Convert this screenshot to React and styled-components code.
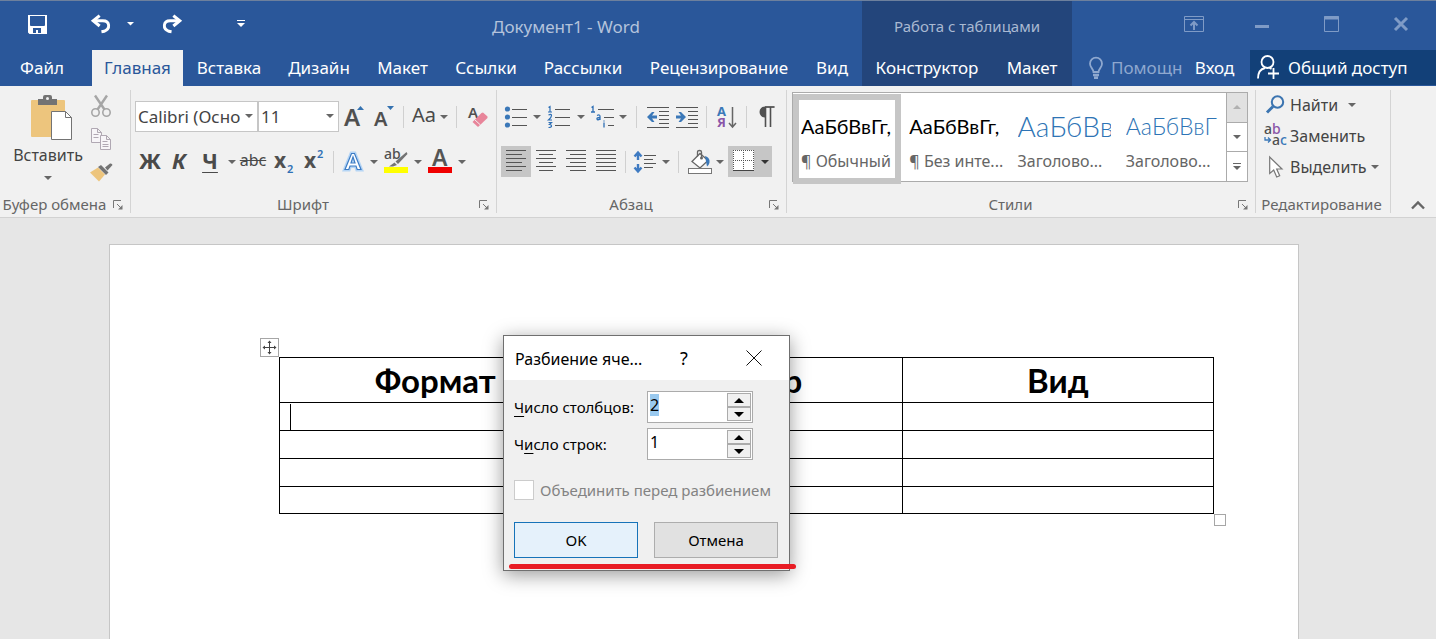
import React, { useEffect, useRef } from "react";
import styled, { createGlobalStyle, css } from "styled-components";

const UI = '"Noto Sans", "Open Sans", sans-serif';
const DOC = 'Lato, "Open Sans", sans-serif';

const Global = createGlobalStyle`
  *, *::before, *::after { box-sizing: border-box; }
  body { margin: 0; font-family: ${UI}; background: #e6e6e6; color: #444; }
  button, input, select { font: inherit; color: inherit; border: 0; padding: 0; margin: 0; background: none; border-radius: 0; }
  svg { display: block; flex: none; overflow: visible; }
`;

const Window = styled.div`
  min-height: 100vh;
  display: flex;
  flex-direction: column;
  overflow: hidden;
`;

/* ---------- header ---------- */
const Header = styled.header`
  display: flex;
  background: #2a579a;
  border-top: 1px solid #6d809d;
  color: #fff;
  font-size: 17px;
`;
const HeadPart = styled.div`
  display: flex;
  flex-direction: column;
  flex: ${(p) => (p.$grow ? "1 1 0" : "none")};
  background: ${(p) => (p.$dark ? "#23457b" : "transparent")};
`;
const TitleRow = styled.div`
  height: 49px;
  display: flex;
  align-items: flex-start;
  justify-content: ${(p) => p.$justify || "flex-start"};
  padding-right: ${(p) => p.$right || 0}px;
`;
const TabRow = styled.nav`
  height: 36px;
  display: flex;
  align-items: stretch;
`;
const QuickButton = styled.button`
  width: ${(p) => p.$w}px;
  height: 46px;
  display: flex;
  align-items: center;
  justify-content: center;
`;
const DocTitle = styled.div`
  flex: 1;
  padding-left: 220px;
  line-height: 51px;
  color: #b4c3dc;
  white-space: nowrap;
`;
const ContextTitle = styled.div`
  font-size: 15px;
  line-height: 51px;
  color: #a9b9d2;
`;
const Tab = styled.button`
  width: ${(p) => p.$w}px;
  margin-right: ${(p) => p.$after || 0}px;
  padding-bottom: 2px;
  white-space: nowrap;
  text-align: center;
  ${(p) => p.$active && css`background: #f1f1f1; color: #2a579a;`}
`;
const TellMe = styled.label`
  display: flex;
  align-items: center;
  gap: 8px;
  padding-left: 17px;
  color: #8fa8cf;
`;
const TellMeInput = styled.input`
  width: 75px;
  padding-bottom: 2px;
  &::placeholder { color: #8fa8cf; opacity: 1; }
`;
const Share = styled.button`
  flex: 1;
  display: flex;
  align-items: center;
  gap: 8px;
  padding: 0 0 1px 7px;
  margin: 0 0 1px 7px;
  background: #124078;
  white-space: nowrap;
`;
const WindowButton = styled(QuickButton)`
  width: 69px;
  color: #7f9bc6;
`;

/* ---------- ribbon ---------- */
const Ribbon = styled.section`
  display: flex;
  height: 132px;
  padding: 4px 0;
  background: #f1f1f1;
  border-bottom: 1px solid #d2d2d2;
`;
const Group = styled.div`
  flex: ${(p) => (p.$grow ? "1 1 0" : "none")};
  min-width: ${(p) => p.$w || 0}px;
  display: flex;
  flex-direction: column;
  border-right: 1px solid #d4d4d4;
`;
const GroupBody = styled.div`
  flex: 1;
  display: flex;
  flex-direction: ${(p) => (p.$row ? "row" : "column")};
  gap: ${(p) => p.$gap || 0}px;
  padding: ${(p) => p.$pad || "11px 0 0 4px"};
`;
const GroupFooter = styled.div`
  display: flex;
  align-items: center;
  height: 17px;
  padding-right: 3px;
  font-size: 15px;
  line-height: 17px;
  color: #666;
`;
const GroupLabel = styled.span`
  flex: 1;
  text-align: center;
  white-space: nowrap;
`;
const LaunchButton = styled.button`
  width: 18px;
  height: 16px;
  display: flex;
  align-items: center;
  justify-content: center;
`;
const ToolRow = styled.div`
  display: flex;
  align-items: center;
  height: 31px;
`;
const Tool = styled.button`
  width: ${(p) => p.$w || 30}px;
  height: 31px;
  display: flex;
  align-items: center;
  justify-content: center;
  gap: 4px;
  background: ${(p) => (p.$on ? "#c6c6c6" : "transparent")};
  margin-left: ${(p) => p.$space || 0}px;
`;
const Letter = styled.span`
  padding-bottom: 4px;
  font-size: ${(p) => p.$size || 22}px;
  line-height: 24px;
  font-weight: ${(p) => p.$weight || 700};
  font-style: ${(p) => (p.$italic ? "italic" : "normal")};
  text-decoration: ${(p) => p.$deco || "none"};
  text-decoration-thickness: 1px;
  text-underline-offset: 3px;
  color: #4a4a4a;
`;
const Sep = styled.i`
  width: 1px;
  height: 22px;
  margin: 0 ${(p) => p.$gap || 4}px;
  background: #d0d0d0;
`;
const Combo = styled.label`
  position: relative;
  width: ${(p) => p.$w}px;
  height: 31px;
  border: 1px solid #c6c6c6;
  background: #fff;
`;
const ComboSelect = styled.select`
  appearance: none;
  width: 100%;
  height: 29px;
  padding: 0 12px 0 2px;
  font-size: 17px;
`;
const ComboArrow = styled.span`
  position: absolute;
  right: 4px;
  top: 12px;
  pointer-events: none;
`;
const PasteButton = styled.button`
  width: 84px;
  padding-top: 5px;
  display: flex;
  flex-direction: column;
  align-items: center;
  font-size: 16px;
  line-height: 30px;
`;
const PasteCaret = styled.span`
  padding-top: 6px;
`;
const SmallTools = styled.div`
  display: flex;
  flex-direction: column;
  gap: 2px;
`;
const Gallery = styled.div`
  flex: 1;
  display: flex;
  height: 90px;
  border: 1px solid #ababab;
  background: #fff;
`;
const GalleryItems = styled.div`
  flex: 1;
  display: grid;
  grid-template-columns: repeat(4, 1fr);
  padding: 1px 0 2px;
`;
const StyleCard = styled.button`
  min-width: 0;
  border: 6px solid ${(p) => (p.$on ? "#c6c6c6" : "transparent")};
  padding: 8px 0 0 2px;
  text-align: left;
`;
const StylePreview = styled.span`
  display: block;
  width: 93px;
  overflow: hidden;
  white-space: nowrap;
  font-family: ${DOC};
  font-size: ${(p) => p.$size || 20}px;
  font-weight: ${(p) => (p.$light ? 300 : 400)};
  line-height: 36px;
  color: ${(p) => (p.$light ? "#2e74b5" : "#000")};
`;
const StyleName = styled.span`
  display: block;
  font-size: 16px;
  line-height: 34px;
  color: #666;
  white-space: nowrap;
`;
const GalleryScroll = styled.div`
  width: 21px;
  display: flex;
  flex-direction: column;
`;
const ScrollButton = styled.button`
  flex: 1;
  display: flex;
  align-items: center;
  justify-content: center;
  border-left: 1px solid #ababab;
  border-bottom: ${(p) => (p.$last ? 0 : 1)}px solid #ababab;
  background: ${(p) => (p.$off ? "#e1e1e1" : "#fff")};
`;
const EditButton = styled.button`
  display: flex;
  align-items: center;
  height: 31px;
  padding-bottom: 2px;
  font-size: 16px;
  white-space: nowrap;
`;
const EditIcon = styled.span`
  width: 26px;
  padding-left: ${(p) => p.$in || 0}px;
`;
const EditCaret = styled.span`
  padding-left: ${(p) => p.$gap}px;
`;
const Collapse = styled.button`
  flex: none;
  width: 45px;
  display: flex;
  align-items: flex-end;
  justify-content: center;
  padding: 0 0 3px 8px;
`;

/* ---------- document ---------- */
const Workspace = styled.main`
  position: relative;
  flex: 1;
  display: flex;
  padding: 26px 137px 0 109px;
`;
const Page = styled.article`
  flex: 1;
  background: #fff;
  border: 1px solid #c6c6c6;
  border-bottom: 0;
  padding: 112px 84px 0 169px;
`;
const TableBox = styled.div`
  position: relative;
`;
const DocTable = styled.table`
  width: 100%;
  table-layout: fixed;
  border-collapse: collapse;
  color: #000;
  font-family: ${DOC};
  th, td { border: 1px solid #000; padding: 0 10px; }
  th { height: 45px; font-size: 33px; line-height: 44px; font-weight: 700; }
  td { height: 28px; }
  tr:last-child td { height: 27px; }
`;
const TextCursor = styled.i`
  display: block;
  width: 1px;
  height: 26px;
  background: #000;
`;
const MoveHandle = styled.button`
  position: absolute;
  left: -19px;
  top: -19px;
  width: 19px;
  height: 19px;
  border: 1px solid #a6a6a6;
  background: #fff;
`;
const SizeHandle = styled.span`
  position: absolute;
  right: -12px;
  bottom: -12px;
  width: 12px;
  height: 12px;
  border: 1px solid #a6a6a6;
  background: #fff;
`;

/* ---------- dialog ---------- */
const Dialog = styled.form`
  position: absolute;
  left: 503px;
  top: 117px;
  width: 287px;
  border: 1px solid #6f6f6f;
  background: #f0f0f0;
  color: #000;
  font-size: 15px;
  box-shadow: 0 4px 18px rgba(0, 0, 0, 0.4);
`;
const DialogTitle = styled.div`
  height: 44px;
  display: flex;
  align-items: center;
  padding-left: 11px;
  background: #fff;
  font-size: 16px;
`;
const TitleText = styled.span`
  flex: 1;
  padding-top: 2px;
  white-space: nowrap;
`;
const TitleButton = styled.button`
  width: 70px;
  height: 42px;
  display: flex;
  align-items: center;
  justify-content: center;
  font-size: 18px;
`;
const DialogBody = styled.div`
  padding: 11px 11px 12px 10px;
`;
const Field = styled.div`
  display: flex;
  align-items: center;
  height: 32px;
  margin-bottom: 5px;
`;
const FieldLabel = styled.label`
  width: 133px;
  white-space: nowrap;
  u { text-underline-offset: 3px; }
`;
const Spinner = styled.div`
  display: flex;
  width: 106px;
  height: 32px;
  padding: 1px;
  border: 1px solid #ababab;
  background: #fff;
`;
const SpinInput = styled.input`
  flex: 1;
  min-width: 0;
  height: 24px;
  padding-left: 1px;
  font-size: 16px;
  outline: 0;
  &::selection { background: #99c9ef; color: #000; }
`;
const SpinButtons = styled.div`
  width: 24px;
  display: flex;
  flex-direction: column;
`;
const SpinButton = styled.button`
  flex: 1;
  display: flex;
  align-items: center;
  justify-content: center;
  border: 1px solid #ababab;
  background: #f0f0f0;
`;
const CheckLabel = styled.label`
  display: flex;
  align-items: center;
  gap: 6px;
  height: 20px;
  margin: 20px 0 22px;
  color: #838383;
  white-space: nowrap;
`;
const Check = styled.input`
  appearance: none;
  flex: none;
  width: 20px;
  height: 20px;
  border: 1px solid #ccc;
  background: #fff;
`;
const Actions = styled.div`
  display: grid;
  grid-template-columns: 1fr 1fr;
  gap: 16px;
`;
const ActionButton = styled.button`
  height: 36px;
  border: 1px solid ${(p) => (p.$primary ? "#1673b9" : "#adadad")};
  background: ${(p) => (p.$primary ? "#e5f1fb" : "#e1e1e1")};
`;
const RedMark = styled.i`
  position: absolute;
  left: 5px;
  right: -7px;
  bottom: 1px;
  height: 5px;
  border-radius: 3px;
  background: #e81c24;
`;

/* ---------- icons ---------- */
const Caret = ({ c = "#666", up, w = 8 }) => (
  <svg width={w} height={w / 2} viewBox="0 0 8 4"><path d={up ? "M0 4h8L4 0z" : "M0 0h8L4 4z"} fill={c} /></svg>
);
const T = ({ x, y, s, c, w = 400, children, ...r }) => (
  <text x={x} y={y} fontSize={s} fill={c} fontWeight={w} {...r}>{children}</text>
);
const Lines = ({ rows, c = "#555" }) => rows.map(([x, y, w], i) => <rect key={i} x={x} y={y} width={w} height="1" fill={c} />);

const SaveIcon = () => (
  <svg width="19" height="19" viewBox="0 0 19 19"><path fillRule="evenodd" fill="#fff" d="M0 0h19v19H1.500L0 17.500zM2 1v9q0 1 1 1h13q1 0 1-1V1zM5 13v5h3v-3h2v3h3v-5z" /></svg>
);
const UndoIcon = () => (
  <svg width="20" height="20" viewBox="0 0 22 20" fill="none" stroke="#fff"><path strokeWidth="3.200" d="M3 6.500h10c8 0 8.500 9 1.500 11.500l-3 .5" /><path strokeWidth="3.400" d="M9.500 .8 2.500 6.500 9.500 12.200" /></svg>
);
const RedoIcon = () => (
  <svg width="20" height="20" viewBox="0 0 22 20" fill="none" stroke="#fff"><path strokeWidth="3.200" d="M19 6.500H9c-8 0-8.500 9-1.500 11.500l3 .5" /><path strokeWidth="3.400" d="m12.500 .8 7 5.700-7 5.700" /></svg>
);
const CustomizeIcon = () => (
  <svg width="8" height="8" viewBox="0 0 8 8" fill="#fff"><path d="M0 0h8v1H0zM0 3h8L4 7z" /></svg>
);
const BulbIcon = () => (
  <svg width="14" height="22" viewBox="0 0 14 22" fill="none" stroke="#8fa8cf" strokeWidth="1.800"><path d="M4.500 15c0-3-3.500-4.500-3.500-8.300a6 6 0 0 1 12 0C13 10.500 9.500 12 9.500 15z" /><path strokeWidth="2.500" d="M4 18h6M5 20.700h4" /></svg>
);
const ShareIcon = () => (
  <svg width="23" height="24" viewBox="0 0 23 24" fill="none" stroke="#fff" strokeWidth="1.800"><circle cx="10.500" cy="7" r="6" /><path d="M1 23.500c0-6 2.500-9.500 7-10.500M12.500 13l2 1M11 18.500h11M16.500 13v11" /></svg>
);
const RibbonOptIcon = () => (
  <svg width="20" height="16" viewBox="0 0 20 16" fill="none" stroke="currentColor"><path d="M.5.5h19v15H.5zM.5 3.500h19" /><path strokeWidth="2" d="M10 14V7M6.500 9.500 10 6l3.500 3.500" /></svg>
);
const PasteIcon = () => (
  <svg width="50" height="45" viewBox="-8 0 50 45"><rect x="0" y="5" width="34" height="37" rx="1" fill="#edc57d" /><path d="M7 4h5V2q0-2 2-2h5q2 0 2 2v2h5v6H7z" fill="#737373" /><circle cx="16.500" cy="3.500" r="1.500" fill="#f1f1f1" /><path d="M20.500 16.500h14l6 6v22h-20z" fill="#fff" stroke="#737373" /><path d="M34.500 16.500v6h6" fill="none" stroke="#737373" /></svg>
);
const CutIcon = () => (
  <svg width="20" height="22" viewBox="0 0 20 22" fill="none" stroke="#a6a6a6"><circle cx="4.500" cy="17.500" r="3.700" strokeWidth="1.600" /><circle cx="15.500" cy="17.500" r="3.700" strokeWidth="1.600" /><path strokeWidth="2.400" d="M4 .5 13.500 14.500M16 .5 6.500 14.500" /></svg>
);
const CopyIcon = () => (
  <svg width="20" height="22" viewBox="0 0 20 22" fill="#f7f5f8" stroke="#b0a8b3"><path d="M.5.5h6l4 4v10H.5zM6.500.5v4h4M2.500 6.500h5M2.500 9.500h5" /><path d="M9.500 7.500h6l4 4v10h-10zM15.500 7.500v4h4M11.500 13.500h5M11.500 16.500h6M11.500 18.500h6" /></svg>
);
const BrushIcon = () => (
  <svg width="23" height="20" viewBox="0 0 23 20"><path d="M0 10.500 8 5.500l7 7L9 19.500z" fill="#edc57d" /><path d="M8 5 11 3l7.500 7.500L16 13z" fill="#737373" /><path d="m15 5.500 5-4q2-.5 2.500 1.500l-5 5.500z" fill="#737373" /></svg>
);
const GrowIcon = ({ down }) => (
  <svg width="20" height="24" viewBox="0 0 20 24">
    <T x="0" y="21" s={down ? 20 : 24} c="#505050" w={600}>A</T>
    <path d={down ? "M13 1h7l-3.500 4z" : "M13 5h7l-3.500-4z"} fill="#3572b0" />
  </svg>
);
const EraserIcon = () => (
  <svg width="20" height="22" viewBox="0 0 20 22"><T x="0" y="12" s="15" c="#505050" w={600}>A</T><path d="m13.500 7 1.500-.5 4.500 4v1.500L10 21l-5.500-5z" fill="#e8859a" /><path d="m6.500 13.500 6 5.500" stroke="#f1f1f1" /></svg>
);
const ScriptIcon = ({ sup }) => (
  <svg width="20" height="24" viewBox="0 0 20 24"><T x="0" y="18" s="21" c="#505050" w={700}>x</T><T x="13" y={sup ? 8 : 23} s="11" c="#2e6fb5" w={600}>2</T></svg>
);
const EffectIcon = () => (
  <svg width="18" height="22" viewBox="0 0 18 22"><path d="M1 18.500 7.500 2.500h3L17 18.500h-3.800l-1.200-3.500H6l-1.200 3.500zM7 12h4L9 6z" fill="#fff" stroke="#b5d5f5" strokeWidth="4" /><path d="M1 18.500 7.500 2.500h3L17 18.500h-3.800l-1.200-3.500H6l-1.200 3.500zM7 12h4L9 6z" fill="#fff" stroke="#3d7cc4" strokeWidth="1.200" /></svg>
);
const HighlightIcon = () => (
  <svg width="24" height="24" viewBox="0 0 24 24"><T x="0" y="9" s="14" c="#505050" w={500}>ab</T><path d="m22.500 2-11 9.500 2.500 2.500L23.500 4zM10.500 12.500l2.500 2.500-4 1.500H5z" fill="#737373" /><rect y="17" width="24" height="6" fill="#ff0" /></svg>
);
const FontColorIcon = () => (
  <svg width="24" height="24" viewBox="0 0 24 24"><T x="4" y="16" s="23" c="#555" w={600}>A</T><rect y="17" width="24" height="6" fill="#f00000" /></svg>
);
const BulletsIcon = () => (
  <svg width="22" height="22" viewBox="0 0 22 22"><g fill="#3b78b8"><circle cx="2.500" cy="3" r="2.600" /><circle cx="2.500" cy="11" r="2.600" /><circle cx="2.500" cy="19" r="2.600" /></g><Lines rows={[[7, 3, 15], [7, 11, 15], [7, 19, 15]]} /></svg>
);
/* list digits drawn as strokes on an 8px pitch */
const NumberIcon = () => (
  <svg width="22" height="22" viewBox="0 0 22 22"><path d="M.5 1.500l1.500-1V6M0 6h4M.5 9q3-1.500 3 .5T.5 14h3.500M.5 16.500h3l-2 2q2 0 2 1.500t-3 1.500" fill="none" stroke="#2e6fb5" strokeWidth="1.200" /><Lines rows={[[7, 3, 15], [7, 11, 15], [7, 19, 15]]} /></svg>
);
const MultiIcon = () => (
  <svg width="23" height="22" viewBox="0 0 23 22"><path d="M.5 1.500l1.500-1V6M0 6h4M6 9.500q3-1.500 3 1V14M9 11.500q-3.500 0-3 1.500t3 0M13 16.500v5M13 14.500v1" fill="none" stroke="#2e6fb5" strokeWidth="1.300" /><Lines rows={[[7, 3, 16], [13, 11, 10], [17, 19, 6]]} /></svg>
);
const IndentIcon = ({ right }) => (
  <svg width="22" height="22" viewBox="0 0 22 22"><Lines rows={[[0, 1, 22], [12, 5, 10], [12, 9, 10], [12, 13, 10], [12, 17, 10], [0, 21, 22]]} /><path fill="#3b78b8" d={right ? "M0 9.500h5L2.500 6H5l5 5-5 5H2.500L5 12.500H0z" : "M10 9.500H5L7.500 6H5l-5 5 5 5h2.500L5 12.500h5z"} /></svg>
);
const SortIcon = () => (
  <svg width="20" height="24" viewBox="0 0 20 24"><T x="0" y="11" s="13" c="#3b78b8" w={700}>А</T><T x="0" y="22" s="13" c="#8a55a8" w={700}>Я</T><path d="M15.500 2v20M12 18l3.500 4 3.500-4" fill="none" stroke="#666" strokeWidth="1.500" /></svg>
);
const PilcrowIcon = () => (
  <svg width="17" height="21" viewBox="0 0 17 21"><path d="M7 11.500A5.500 5.500 0 0 1 7 .5h10v1H7z" fill="#505050" /><path d="M7 1h9M7.500 1v20M12.500 1v20" stroke="#505050" strokeWidth="1.600" fill="none" /></svg>
);
const alignRows = {
  left: [20, 16, 20, 16, 20, 16].map((w, i) => [0, i * 4, w]),
  center: [20, 14, 20, 14, 20, 14].map((w, i) => [(20 - w) / 2, i * 4, w]),
  right: [20, 16, 20, 16, 20, 16].map((w, i) => [20 - w, i * 4, w]),
  justify: [0, 1, 2, 3, 4, 5].map((i) => [0, i * 4, 20]),
};
const AlignIcon = ({ kind }) => <svg width="20" height="23" viewBox="0 0 20 23"><Lines rows={alignRows[kind]} /></svg>;
const SpacingIcon = () => (
  <svg width="22" height="22" viewBox="0 0 22 22"><path d="M4 9V2M.5 5.500 4 1.500l3.500 4M4 13v7M.5 16.500 4 20.500l3.500-4" fill="none" stroke="#3f7bc2" strokeWidth="2.400" /><Lines rows={[[10, 4, 12], [10, 8, 9], [10, 12, 12], [10, 16, 9]]} /></svg>
);
const ShadingIcon = () => (
  <svg width="24" height="24" viewBox="0 0 24 24"><path d="M4 11.500 12 3.500l8 7L12 18z" fill="#fff" stroke="#666" strokeWidth="1.300" /><path d="M9.500 6.500V2q0-1.500 2-1.500t2 1.500v5" fill="none" stroke="#666" strokeWidth="1.300" /><circle cx="13.500" cy="8" r="1.500" fill="#666" /><path d="M17 6q4 1 4.500 4.500t-2.500 6z" fill="#3b78b8" /><rect x=".5" y="18.500" width="23" height="5" fill="#fff" stroke="#777" /></svg>
);
const BordersIcon = () => (
  <svg width="21" height="23" viewBox="0 0 21 23"><rect width="21" height="21" fill="#fff" /><path d="M.5 0v20M20.500 0v20M0 .5h21M10.500 0v20M0 10.500h21" stroke="#555" strokeDasharray="1 1" /><path d="M0 20.500h21" stroke="#444" /></svg>
);
const LaunchIcon = () => (
  <svg width="10" height="10" viewBox="0 0 10 10" fill="none" stroke="#777"><path d="M.5 8V.5H8M4 4l4 4" /><path d="M9.500 5v4.500H5z" fill="#777" stroke="none" /></svg>
);
const FindIcon = () => (
  <svg width="19" height="19" viewBox="0 0 19 19" fill="none" stroke="#3b74b0"><circle cx="11.500" cy="7" r="5.700" strokeWidth="2" /><path d="m7 11.500-6 6" strokeWidth="3" /></svg>
);
const ReplaceIcon = () => (
  <svg width="23" height="22" viewBox="0 0 23 22"><T x="0" y="9" s="14" c="#505050" w={500}>a<tspan fill="#8a55a8">b</tspan></T><T x="8" y="20" s="14" c="#505050" w={500}>a<tspan fill="#3b78b8">c</tspan></T><path d="M1 12v3h5M4 12.500 6.500 15 4 17.500" fill="none" stroke="#3b78b8" strokeWidth="1.300" /></svg>
);
const SelectIcon = () => (
  <svg width="14" height="22" viewBox="0 0 14 22"><path d="M.7 1v16.500l4-3.500 3 7 3-1.300-3-6.700H13z" fill="#fff" stroke="#777" strokeWidth="1.200" /></svg>
);

const tabs = [["Файл", 84, 8], ["Главная", 91], ["Вставка", 92], ["Дизайн", 88], ["Макет", 79], ["Ссылки", 88], ["Рассылки", 106], ["Рецензирование", 166], ["Вид", 60]];

const Launcher = ({ name }) => <LaunchButton aria-label={name}><LaunchIcon /></LaunchButton>;
const Drop = ({ w = 12, on, c }) => <Tool $w={w} $on={on} aria-label="Ещё"><Caret c={c} /></Tool>;

export default function App() {
  const cols = useRef(null);
  useEffect(() => {
    cols.current.focus();
    cols.current.select();
  }, []);
  return (
    <Window>
      <Global />
      <Header>
        <HeadPart>
          <TitleRow>
            <QuickButton $w={75} aria-label="Сохранить"><SaveIcon /></QuickButton>
            <QuickButton $w={52} aria-label="Отменить"><UndoIcon /></QuickButton>
            <QuickButton $w={7} aria-label="Список отмены"><Caret c="#fff" w={7} /></QuickButton>
            <QuickButton $w={76} aria-label="Повторить"><RedoIcon /></QuickButton>
            <QuickButton $w={62} aria-label="Настройка панели"><CustomizeIcon /></QuickButton>
            <DocTitle>Документ1 - Word</DocTitle>
          </TitleRow>
          <TabRow>
            {tabs.map(([t, w, after]) => <Tab key={t} $w={w} $after={after} $active={t === "Главная"}>{t}</Tab>)}
          </TabRow>
        </HeadPart>
        <HeadPart $dark>
          <TitleRow $justify="center"><ContextTitle>Работа с таблицами</ContextTitle></TitleRow>
          <TabRow>
            <Tab $w={130}>Конструктор</Tab>
            <Tab $w={80}>Макет</Tab>
          </TabRow>
        </HeadPart>
        <HeadPart $grow>
          <TitleRow $justify="flex-end" $right={1}>
            <WindowButton aria-label="Параметры ленты"><RibbonOptIcon /></WindowButton>
            <WindowButton aria-label="Свернуть"><svg width="16" height="16"><path d="M0 10.500h14" stroke="currentColor" strokeWidth="3" /></svg></WindowButton>
            <WindowButton aria-label="Развернуть"><svg width="16" height="16" fill="none" stroke="currentColor"><path d="M.5.500h14v15H.500z" /><path d="M0 2h15" strokeWidth="3" /></svg></WindowButton>
            <WindowButton aria-label="Закрыть"><svg width="14" height="14"><path d="m1 1 12 12M13 1 1 13" stroke="currentColor" strokeWidth="3" /></svg></WindowButton>
          </TitleRow>
          <TabRow>
            <TellMe><BulbIcon /><TellMeInput placeholder="Помощн" aria-label="Помощник" /></TellMe>
            <Tab $w={57}>Вход</Tab>
            <Share><ShareIcon />Общий доступ</Share>
          </TabRow>
        </HeadPart>
      </Header>

      <Ribbon>
        <Group $w={131}>
          <GroupBody $row $pad="0 0 0 6px">
            <PasteButton><PasteIcon />Вставить<PasteCaret><Caret /></PasteCaret></PasteButton>
            <SmallTools>
              <Tool $w={22} aria-label="Вырезать"><CutIcon /></Tool>
              <Tool $w={22} aria-label="Копировать"><CopyIcon /></Tool>
              <Tool $w={22} aria-label="Формат по образцу"><BrushIcon /></Tool>
            </SmallTools>
          </GroupBody>
          <GroupFooter><GroupLabel>Буфер обмена</GroupLabel><Launcher name="Буфер обмена" /></GroupFooter>
        </Group>

        <Group $w={366}>
          <GroupBody $gap={14}>
            <ToolRow>
              <Combo $w={123}><ComboSelect aria-label="Шрифт"><option>Calibri (Осно</option></ComboSelect><ComboArrow><Caret /></ComboArrow></Combo>
              <Combo $w={81}><ComboSelect aria-label="Размер шрифта"><option>11</option></ComboSelect><ComboArrow><Caret /></ComboArrow></Combo>
              <Tool $w={30} aria-label="Увеличить"><GrowIcon /></Tool>
              <Tool $w={30} aria-label="Уменьшить"><GrowIcon down /></Tool>
              <Sep />
              <Tool $w={44}><Letter $size={20} $weight={400}>Aa</Letter><Caret /></Tool>
              <Sep />
              <Tool $w={34} aria-label="Очистить формат"><EraserIcon /></Tool>
            </ToolRow>
            <ToolRow>
              <Tool><Letter>Ж</Letter></Tool>
              <Tool $w={28}><Letter $italic>К</Letter></Tool>
              <Tool $w={34}><Letter $deco="underline">Ч</Letter></Tool>
              <Drop w={10} />
              <Tool $w={32}><Letter $size={16} $weight={400} $deco="line-through">abc</Letter></Tool>
              <Tool aria-label="Подстрочный"><ScriptIcon /></Tool>
              <Tool aria-label="Надстрочный"><ScriptIcon sup /></Tool>
              <Sep />
              <Tool aria-label="Эффекты"><EffectIcon /></Tool><Drop />
              <Tool $w={32} aria-label="Выделение цветом"><HighlightIcon /></Tool><Drop />
              <Tool $w={32} aria-label="Цвет текста"><FontColorIcon /></Tool><Drop />
            </ToolRow>
          </GroupBody>
          <GroupFooter><GroupLabel>Шрифт</GroupLabel><Launcher name="Шрифт" /></GroupFooter>
        </Group>

        <Group $w={290}>
          <GroupBody $gap={14}>
            <ToolRow>
              <Tool aria-label="Маркеры"><BulletsIcon /></Tool><Drop />
              <Tool $w={32} aria-label="Нумерация"><NumberIcon /></Tool><Drop />
              <Tool aria-label="Многоуровневый список"><MultiIcon /></Tool><Drop />
              <Sep $gap={7} />
              <Tool $w={28} aria-label="Уменьшить отступ"><IndentIcon /></Tool>
              <Tool aria-label="Увеличить отступ"><IndentIcon right /></Tool>
              <Sep />
              <Tool $w={31} aria-label="Сортировка"><SortIcon /></Tool>
              <Sep />
              <Tool aria-label="Знаки абзаца"><PilcrowIcon /></Tool>
            </ToolRow>
            <ToolRow>
              <Tool $on aria-label="По левому краю"><AlignIcon kind="left" /></Tool>
              <Tool aria-label="По центру"><AlignIcon kind="center" /></Tool>
              <Tool aria-label="По правому краю"><AlignIcon kind="right" /></Tool>
              <Tool aria-label="По ширине"><AlignIcon kind="justify" /></Tool>
              <Sep />
              <Tool aria-label="Интервал"><SpacingIcon /></Tool><Drop />
              <Sep $gap={6} />
              <Tool $w={29} aria-label="Заливка"><ShadingIcon /></Tool><Drop />
              <Tool $on $space={2} aria-label="Границы"><BordersIcon /></Tool><Drop w={14} on c="#333" />
            </ToolRow>
          </GroupBody>
          <GroupFooter><GroupLabel>Абзац</GroupLabel><Launcher name="Абзац" /></GroupFooter>
        </Group>

        <Group $grow $w={469}>
          <GroupBody $row $pad="2px 7px 0 5px">
            <Gallery>
              <GalleryItems>
                <StyleCard $on><StylePreview>АаБбВвГг,</StylePreview><StyleName>¶ Обычный</StyleName></StyleCard>
                <StyleCard><StylePreview>АаБбВвГг,</StylePreview><StyleName>¶ Без инте...</StyleName></StyleCard>
                <StyleCard><StylePreview $light $size={28}>АаБбВв</StylePreview><StyleName>Заголово...</StyleName></StyleCard>
                <StyleCard><StylePreview $light $size={23}>АаБбВвГ</StylePreview><StyleName>Заголово...</StyleName></StyleCard>
              </GalleryItems>
              <GalleryScroll>
                <ScrollButton $off aria-label="Вверх"><Caret up c="#b0b0b0" /></ScrollButton>
                <ScrollButton aria-label="Вниз"><Caret /></ScrollButton>
                <ScrollButton $last aria-label="Все стили"><svg width="8" height="8" viewBox="0 0 8 8" fill="#666"><path d="M0 0h8v1H0zM0 3h8L4 7z" /></svg></ScrollButton>
              </GalleryScroll>
            </Gallery>
          </GroupBody>
          <GroupFooter><GroupLabel>Стили</GroupLabel><Launcher name="Стили" /></GroupFooter>
        </Group>

        <Group $w={135}>
          <GroupBody $pad="0 0 0 8px">
            <EditButton><EditIcon $in={2}><FindIcon /></EditIcon>Найти<EditCaret $gap={10}><Caret /></EditCaret></EditButton>
            <EditButton><EditIcon><ReplaceIcon /></EditIcon>Заменить</EditButton>
            <EditButton><EditIcon $in={5}><SelectIcon /></EditIcon>Выделить<EditCaret $gap={4}><Caret /></EditCaret></EditButton>
          </GroupBody>
          <GroupFooter><GroupLabel>Редактирование</GroupLabel></GroupFooter>
        </Group>
        <Collapse aria-label="Свернуть ленту"><svg width="14" height="9" viewBox="0 0 14 9"><path d="m1 7.500 6-6 6 6" fill="none" stroke="#666" strokeWidth="2.400" /></svg></Collapse>
      </Ribbon>

      <Workspace>
        <Page>
          <TableBox>
            <MoveHandle aria-label="Переместить таблицу"><svg width="17" height="17" viewBox="0 0 17 17"><path d="M8.500 2v13M2 8.500h13" stroke="#444" /><path d="m6.500 4 2-2.500 2 2.500zM6.500 13l2 2.500 2-2.500zM4 6.500 1.500 8.500 4 10.500zM13 6.500l2.500 2-2.500 2z" fill="#444" /></svg></MoveHandle>
            <DocTable>
              <thead><tr><th>Формат</th><th>Размер</th><th>Вид</th></tr></thead>
              <tbody>
                <tr><td><TextCursor /></td><td /><td /></tr>
                <tr><td /><td /><td /></tr>
                <tr><td /><td /><td /></tr>
                <tr><td /><td /><td /></tr>
              </tbody>
            </DocTable>
            <SizeHandle />
          </TableBox>
        </Page>

        <Dialog role="dialog" aria-label="Разбиение ячеек" onSubmit={(e) => e.preventDefault()}>
          <DialogTitle>
            <TitleText>Разбиение яче...</TitleText>
            <TitleButton type="button">?</TitleButton>
            <TitleButton type="button" aria-label="Закрыть"><svg width="16" height="16"><path d="m.5.500 15 15M15.500.500l-15 15" stroke="#111" /></svg></TitleButton>
          </DialogTitle>
          <DialogBody>
            <Field>
              <FieldLabel htmlFor="cols"><u>Ч</u>исло столбцов:</FieldLabel>
              <Spinner>
                <SpinInput id="cols" ref={cols} defaultValue="2" />
                <SpinButtons>
                  <SpinButton type="button" aria-label="Больше"><Caret up c="#000" w={10} /></SpinButton>
                  <SpinButton type="button" aria-label="Меньше"><Caret c="#000" w={10} /></SpinButton>
                </SpinButtons>
              </Spinner>
            </Field>
            <Field>
              <FieldLabel htmlFor="rows">Ч<u>и</u>сло строк:</FieldLabel>
              <Spinner>
                <SpinInput id="rows" defaultValue="1" />
                <SpinButtons>
                  <SpinButton type="button" aria-label="Больше"><Caret up c="#000" w={10} /></SpinButton>
                  <SpinButton type="button" aria-label="Меньше"><Caret c="#000" w={10} /></SpinButton>
                </SpinButtons>
              </Spinner>
            </Field>
            <CheckLabel><Check type="checkbox" disabled />Объединить перед разбиением</CheckLabel>
            <Actions>
              <ActionButton $primary type="submit">OK</ActionButton>
              <ActionButton type="button">Отмена</ActionButton>
            </Actions>
          </DialogBody>
          <RedMark />
        </Dialog>
      </Workspace>
    </Window>
  );
}
